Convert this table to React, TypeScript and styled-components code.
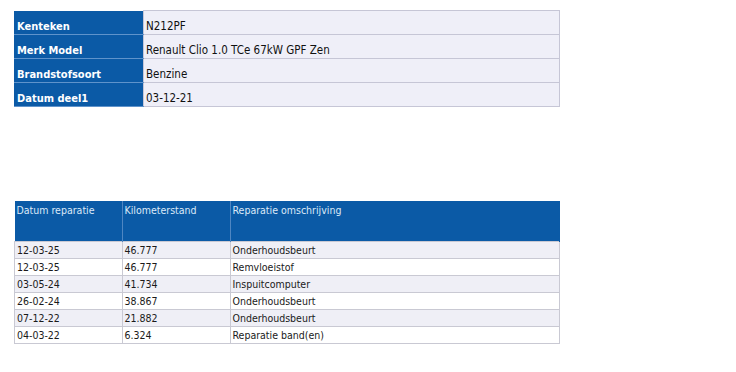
import React from "react";
import styled, { createGlobalStyle } from "styled-components";

const Global = createGlobalStyle`
  html, body { margin: 0; padding: 0; background: #ffffff; }
  body { font-family: Tahoma, "DejaVu Sans Condensed", "DejaVu Sans", sans-serif; }
`;

const Page = styled.div`
  padding: 10px 0 0 14px;
  display: flex;
  flex-direction: column;
  gap: 94px;
`;

const InfoTable = styled.table`
  border-collapse: collapse;
  width: 546px;
  table-layout: fixed;
  font-size: 11px;
`;

const Label = styled.th`
  width: 124px;
  background: #0b5aa6;
  color: #ffffff;
  font-weight: bold;
  font-size: 11px;
  text-align: left;
  vertical-align: bottom;
  height: 22px;
  line-height: 13px;
  padding: 0 2px 1px 2px;
  border-bottom: 1px solid #5f93cb;
  border-left: 1px solid #0b5aa6;
`;

const Value = styled.td`
  background: #efeff8;
  color: #111111;
  vertical-align: bottom;
  height: 22px;
  line-height: 14px;
  padding: 0 2px 1px 2px;
  border: 1px solid #c6c6d6;
  font-size: 11.5px;
`;

const RepairTable = styled.table`
  border-collapse: collapse;
  width: 546px;
  table-layout: fixed;
  font-size: 10.5px;
`;

const HeadCell = styled.th<{ $w?: number }>`
  ${(p) => (p.$w ? `width: ${p.$w}px;` : "")}
  background: #0b5aa6;
  color: #dbe9f8;
  font-weight: normal;
  text-align: left;
  vertical-align: top;
  height: 37px;
  line-height: 13px;
  padding: 3px 2px 0 2px;
  border-right: 1px solid #4f86c2;
  &:last-child { border-right: 1px solid #0b5aa6; }
`;

const Row = styled.tr<{ $alt: boolean }>`
  background: ${(p) => (p.$alt ? "#efeff6" : "#ffffff")};
`;

const Cell = styled.td`
  height: 16px;
  padding: 0 2px;
  color: #1a1a1a;
  border: 1px solid #c9c9d3;
  vertical-align: middle;
  line-height: 14px;
`;

const info: [string, string][] = [
  ["Kenteken", "N212PF"],
  ["Merk Model", "Renault Clio 1.0 TCe 67kW GPF Zen"],
  ["Brandstofsoort", "Benzine"],
  ["Datum deel1", "03-12-21"],
];

const repairs: [string, string, string][] = [
  ["12-03-25", "46.777", "Onderhoudsbeurt"],
  ["12-03-25", "46.777", "Remvloeistof"],
  ["03-05-24", "41.734", "Inspuitcomputer"],
  ["26-02-24", "38.867", "Onderhoudsbeurt"],
  ["07-12-22", "21.882", "Onderhoudsbeurt"],
  ["04-03-22", "6.324", "Reparatie band(en)"],
];

export default function App() {
  return (
    <>
      <Global />
      <Page>
        <InfoTable>
          <tbody>
            {info.map(([k, v]) => (
              <tr key={k}>
                <Label>{k}</Label>
                <Value>{v}</Value>
              </tr>
            ))}
          </tbody>
        </InfoTable>
        <RepairTable>
          <thead>
            <tr>
              <HeadCell $w={103}>Datum reparatie</HeadCell>
              <HeadCell $w={103}>Kilometerstand</HeadCell>
              <HeadCell>Reparatie omschrijving</HeadCell>
            </tr>
          </thead>
          <tbody>
            {repairs.map((r, i) => (
              <Row key={i} $alt={i % 2 === 0}>
                <Cell>{r[0]}</Cell>
                <Cell>{r[1]}</Cell>
                <Cell>{r[2]}</Cell>
              </Row>
            ))}
          </tbody>
        </RepairTable>
      </Page>
    </>
  );
}
